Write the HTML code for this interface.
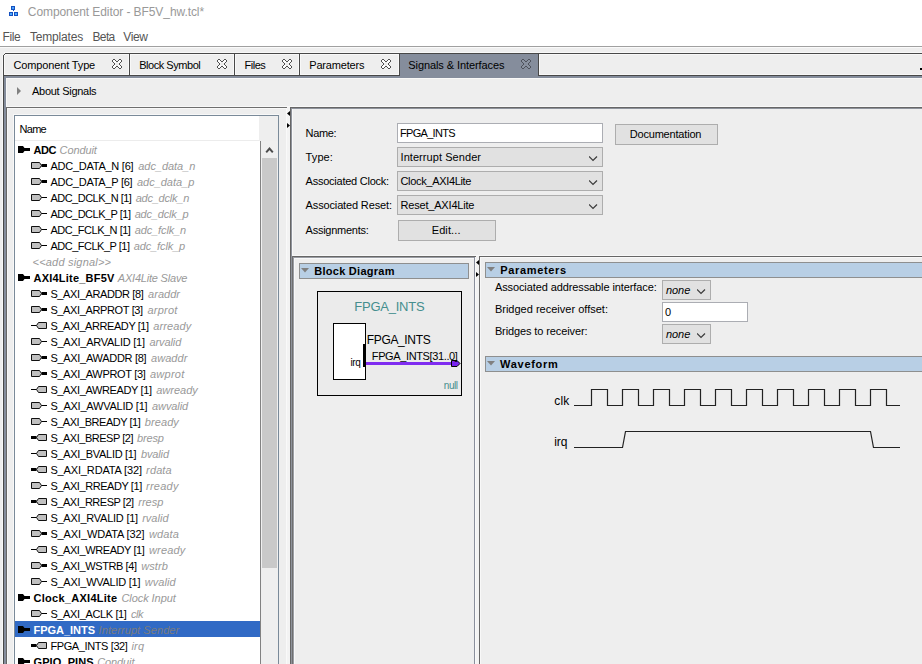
<!DOCTYPE html>
<html>
<head>
<meta charset="utf-8">
<title>Component Editor - BF5V_hw.tcl*</title>
<style>
html,body{margin:0;padding:0;}
body{width:922px;height:664px;overflow:hidden;position:relative;background:#eeeeee;font-family:"Liberation Sans",sans-serif;font-size:11px;color:#000;}
.abs{position:absolute;}
.t{position:absolute;white-space:pre;line-height:14px;height:14px;z-index:2;}
/* title + menu */
#titlebar{left:0;top:0;width:922px;height:46px;background:#fff;}
#title{left:28px;top:3px;font-size:12px;line-height:20px;height:20px;color:#999;}
.menu{font-size:12px;color:#555;top:30px;line-height:14px;}
#menuline{left:0;top:46px;width:922px;height:1px;background:#a0a0a0;}
/* tabs */
.tabt{top:58px;}
svg.xi{position:absolute;top:59px;}
/* tree */
.row{position:absolute;left:15px;width:245px;height:16px;}
.row.sel{background:#316ac5;}
.row .ico{position:absolute;top:4px;height:9px;width:14px;}
.row .ico svg{display:block;}
.row .tx{position:absolute;top:1px;line-height:14px;white-space:pre;font-size:11px;}
.row i{color:#999;}
.row.sel b{color:#fff;}
.row.sel i{color:#7f7f7f;}
/* form */
.combo{position:absolute;box-sizing:border-box;background:#e1e1e1;border:1px solid #adadad;}
.btn{position:absolute;box-sizing:border-box;background:#e1e1e1;border:1px solid #adadad;text-align:center;}
.inp{position:absolute;box-sizing:border-box;background:#fff;border:1px solid #abadb3;}
.hdr{position:absolute;box-sizing:border-box;background:#b8cfe5;border:1px solid #8e8f8f;height:16px;}
.hdr .t{font-weight:bold;top:0px;}
</style>
</head>
<body>
<!-- title bar + menu -->
<div id="titlebar" class="abs"></div>
<svg class="abs" style="left:9px;top:6px" width="9" height="10" viewBox="0 0 9 10">
  <rect x="2" y="0" width="4" height="4" fill="#1450c0"/><rect x="3" y="1" width="2" height="2" fill="#4aa0f8"/>
  <rect x="4" y="4" width="1" height="1" fill="#1450c0"/>
  <rect x="0" y="6" width="4" height="4" fill="#1450c0"/><rect x="1" y="7" width="2" height="2" fill="#4aa8ff"/>
  <rect x="5" y="6" width="4" height="4" fill="#1450c0"/><rect x="6" y="7" width="2" height="2" fill="#4aa8ff"/>
</svg>
<div class="t" style="left:27.8px;top:4.84px;font-size:12px;line-height:14px;height:14px;letter-spacing:-0.083px;color:#999;">Component Editor - BF5V_hw.tcl*</div>
<div class="t" style="left:2.6px;top:29.84px;font-size:12px;line-height:14px;height:14px;letter-spacing:-0.411px;color:#555;">File</div>
<div class="t" style="left:29.9px;top:29.84px;font-size:12px;line-height:14px;height:14px;letter-spacing:-0.178px;color:#555;">Templates</div>
<div class="t" style="left:92.5px;top:29.84px;font-size:12px;line-height:14px;height:14px;letter-spacing:-0.647px;color:#555;">Beta</div>
<div class="t" style="left:123.3px;top:29.84px;font-size:12px;line-height:14px;height:14px;letter-spacing:-0.374px;color:#555;">View</div>
<div id="menuline" class="abs"></div>
<div class="abs" style="left:0;top:47px;width:922px;height:1px;background:#fafafa;"></div>

<!-- tab strip -->
<div class="abs" style="left:4px;top:52px;width:918px;height:1px;background:#f8f8f8;"></div>
<div class="abs" style="left:5px;top:53px;width:917px;height:1px;background:#484848;"></div>
<div class="abs" style="left:5px;top:54px;width:917px;height:1px;background:#f8f8f8;"></div>
<div class="abs" style="left:4px;top:54px;width:1px;height:1px;background:#484848;"></div>
<div class="abs" style="left:2px;top:55px;width:1px;height:609px;background:#f8f8f8;"></div>
<div class="abs" style="left:4px;top:55px;width:1px;height:20px;background:#f8f8f8;"></div>
<div class="abs" style="left:4px;top:74px;width:918px;height:1px;background:#f8f8f8;"></div>
<div class="abs" style="left:128px;top:55px;width:1px;height:19px;background:#f8f8f8;"></div><div class="abs" style="left:129px;top:54px;width:1px;height:21px;background:#484848;"></div><div class="abs" style="left:130px;top:55px;width:1px;height:19px;background:#f8f8f8;"></div><div class="abs" style="left:233px;top:55px;width:1px;height:19px;background:#f8f8f8;"></div><div class="abs" style="left:234px;top:54px;width:1px;height:21px;background:#484848;"></div><div class="abs" style="left:235px;top:55px;width:1px;height:19px;background:#f8f8f8;"></div><div class="abs" style="left:298px;top:55px;width:1px;height:19px;background:#f8f8f8;"></div><div class="abs" style="left:299px;top:54px;width:1px;height:21px;background:#484848;"></div><div class="abs" style="left:300px;top:55px;width:1px;height:19px;background:#f8f8f8;"></div><div class="abs" style="left:398px;top:55px;width:1px;height:19px;background:#f8f8f8;"></div><div class="abs" style="left:399px;top:54px;width:1px;height:21px;background:#484848;"></div>
<div class="t" style="left:13.5px;top:58.19px;font-size:11px;line-height:14px;height:14px;letter-spacing:-0.141px;">Component Type</div><svg class="xi" style="left:112px" width="10" height="10" viewBox="0 0 10 10" shape-rendering="crispEdges"><path d="M1 1h1v1h-1zM2 1h1v1h-1zM7 1h1v1h-1zM8 1h1v1h-1zM1 2h1v1h-1zM2 2h1v1h-1zM3 2h1v1h-1zM6 2h1v1h-1zM7 2h1v1h-1zM8 2h1v1h-1zM2 3h1v1h-1zM3 3h1v1h-1zM6 3h1v1h-1zM7 3h1v1h-1zM2 6h1v1h-1zM3 6h1v1h-1zM6 6h1v1h-1zM7 6h1v1h-1zM1 7h1v1h-1zM2 7h1v1h-1zM3 7h1v1h-1zM6 7h1v1h-1zM7 7h1v1h-1zM8 7h1v1h-1zM1 8h1v1h-1zM2 8h1v1h-1zM7 8h1v1h-1zM8 8h1v1h-1z" fill="#ffffff"/><path d="M4 3h1v1h-1zM5 3h1v1h-1zM3 4h1v1h-1zM4 4h1v1h-1zM5 4h1v1h-1zM6 4h1v1h-1zM3 5h1v1h-1zM4 5h1v1h-1zM5 5h1v1h-1zM6 5h1v1h-1zM4 6h1v1h-1zM5 6h1v1h-1z" fill="#eeeeee"/><path d="M1 0h1v1h-1zM2 0h1v1h-1zM7 0h1v1h-1zM8 0h1v1h-1zM0 1h1v1h-1zM3 1h1v1h-1zM6 1h1v1h-1zM9 1h1v1h-1zM0 2h1v1h-1zM4 2h1v1h-1zM5 2h1v1h-1zM9 2h1v1h-1zM1 3h1v1h-1zM8 3h1v1h-1zM2 4h1v1h-1zM7 4h1v1h-1zM2 5h1v1h-1zM7 5h1v1h-1zM1 6h1v1h-1zM8 6h1v1h-1zM0 7h1v1h-1zM4 7h1v1h-1zM5 7h1v1h-1zM9 7h1v1h-1zM0 8h1v1h-1zM3 8h1v1h-1zM6 8h1v1h-1zM9 8h1v1h-1zM1 9h1v1h-1zM2 9h1v1h-1zM7 9h1v1h-1zM8 9h1v1h-1z" fill="#4f4f4f"/></svg>
<div class="t" style="left:139.2px;top:58.19px;font-size:11px;line-height:14px;height:14px;letter-spacing:-0.462px;">Block Symbol</div><svg class="xi" style="left:217px" width="10" height="10" viewBox="0 0 10 10" shape-rendering="crispEdges"><path d="M1 1h1v1h-1zM2 1h1v1h-1zM7 1h1v1h-1zM8 1h1v1h-1zM1 2h1v1h-1zM2 2h1v1h-1zM3 2h1v1h-1zM6 2h1v1h-1zM7 2h1v1h-1zM8 2h1v1h-1zM2 3h1v1h-1zM3 3h1v1h-1zM6 3h1v1h-1zM7 3h1v1h-1zM2 6h1v1h-1zM3 6h1v1h-1zM6 6h1v1h-1zM7 6h1v1h-1zM1 7h1v1h-1zM2 7h1v1h-1zM3 7h1v1h-1zM6 7h1v1h-1zM7 7h1v1h-1zM8 7h1v1h-1zM1 8h1v1h-1zM2 8h1v1h-1zM7 8h1v1h-1zM8 8h1v1h-1z" fill="#ffffff"/><path d="M4 3h1v1h-1zM5 3h1v1h-1zM3 4h1v1h-1zM4 4h1v1h-1zM5 4h1v1h-1zM6 4h1v1h-1zM3 5h1v1h-1zM4 5h1v1h-1zM5 5h1v1h-1zM6 5h1v1h-1zM4 6h1v1h-1zM5 6h1v1h-1z" fill="#eeeeee"/><path d="M1 0h1v1h-1zM2 0h1v1h-1zM7 0h1v1h-1zM8 0h1v1h-1zM0 1h1v1h-1zM3 1h1v1h-1zM6 1h1v1h-1zM9 1h1v1h-1zM0 2h1v1h-1zM4 2h1v1h-1zM5 2h1v1h-1zM9 2h1v1h-1zM1 3h1v1h-1zM8 3h1v1h-1zM2 4h1v1h-1zM7 4h1v1h-1zM2 5h1v1h-1zM7 5h1v1h-1zM1 6h1v1h-1zM8 6h1v1h-1zM0 7h1v1h-1zM4 7h1v1h-1zM5 7h1v1h-1zM9 7h1v1h-1zM0 8h1v1h-1zM3 8h1v1h-1zM6 8h1v1h-1zM9 8h1v1h-1zM1 9h1v1h-1zM2 9h1v1h-1zM7 9h1v1h-1zM8 9h1v1h-1z" fill="#4f4f4f"/></svg>
<div class="t" style="left:244.5px;top:58.19px;font-size:11px;line-height:14px;height:14px;letter-spacing:-0.467px;">Files</div><svg class="xi" style="left:282px" width="10" height="10" viewBox="0 0 10 10" shape-rendering="crispEdges"><path d="M1 1h1v1h-1zM2 1h1v1h-1zM7 1h1v1h-1zM8 1h1v1h-1zM1 2h1v1h-1zM2 2h1v1h-1zM3 2h1v1h-1zM6 2h1v1h-1zM7 2h1v1h-1zM8 2h1v1h-1zM2 3h1v1h-1zM3 3h1v1h-1zM6 3h1v1h-1zM7 3h1v1h-1zM2 6h1v1h-1zM3 6h1v1h-1zM6 6h1v1h-1zM7 6h1v1h-1zM1 7h1v1h-1zM2 7h1v1h-1zM3 7h1v1h-1zM6 7h1v1h-1zM7 7h1v1h-1zM8 7h1v1h-1zM1 8h1v1h-1zM2 8h1v1h-1zM7 8h1v1h-1zM8 8h1v1h-1z" fill="#ffffff"/><path d="M4 3h1v1h-1zM5 3h1v1h-1zM3 4h1v1h-1zM4 4h1v1h-1zM5 4h1v1h-1zM6 4h1v1h-1zM3 5h1v1h-1zM4 5h1v1h-1zM5 5h1v1h-1zM6 5h1v1h-1zM4 6h1v1h-1zM5 6h1v1h-1z" fill="#eeeeee"/><path d="M1 0h1v1h-1zM2 0h1v1h-1zM7 0h1v1h-1zM8 0h1v1h-1zM0 1h1v1h-1zM3 1h1v1h-1zM6 1h1v1h-1zM9 1h1v1h-1zM0 2h1v1h-1zM4 2h1v1h-1zM5 2h1v1h-1zM9 2h1v1h-1zM1 3h1v1h-1zM8 3h1v1h-1zM2 4h1v1h-1zM7 4h1v1h-1zM2 5h1v1h-1zM7 5h1v1h-1zM1 6h1v1h-1zM8 6h1v1h-1zM0 7h1v1h-1zM4 7h1v1h-1zM5 7h1v1h-1zM9 7h1v1h-1zM0 8h1v1h-1zM3 8h1v1h-1zM6 8h1v1h-1zM9 8h1v1h-1zM1 9h1v1h-1zM2 9h1v1h-1zM7 9h1v1h-1zM8 9h1v1h-1z" fill="#4f4f4f"/></svg>
<div class="t" style="left:309.3px;top:58.19px;font-size:11px;line-height:14px;height:14px;letter-spacing:-0.196px;">Parameters</div><svg class="xi" style="left:381px" width="10" height="10" viewBox="0 0 10 10" shape-rendering="crispEdges"><path d="M1 1h1v1h-1zM2 1h1v1h-1zM7 1h1v1h-1zM8 1h1v1h-1zM1 2h1v1h-1zM2 2h1v1h-1zM3 2h1v1h-1zM6 2h1v1h-1zM7 2h1v1h-1zM8 2h1v1h-1zM2 3h1v1h-1zM3 3h1v1h-1zM6 3h1v1h-1zM7 3h1v1h-1zM2 6h1v1h-1zM3 6h1v1h-1zM6 6h1v1h-1zM7 6h1v1h-1zM1 7h1v1h-1zM2 7h1v1h-1zM3 7h1v1h-1zM6 7h1v1h-1zM7 7h1v1h-1zM8 7h1v1h-1zM1 8h1v1h-1zM2 8h1v1h-1zM7 8h1v1h-1zM8 8h1v1h-1z" fill="#ffffff"/><path d="M4 3h1v1h-1zM5 3h1v1h-1zM3 4h1v1h-1zM4 4h1v1h-1zM5 4h1v1h-1zM6 4h1v1h-1zM3 5h1v1h-1zM4 5h1v1h-1zM5 5h1v1h-1zM6 5h1v1h-1zM4 6h1v1h-1zM5 6h1v1h-1z" fill="#eeeeee"/><path d="M1 0h1v1h-1zM2 0h1v1h-1zM7 0h1v1h-1zM8 0h1v1h-1zM0 1h1v1h-1zM3 1h1v1h-1zM6 1h1v1h-1zM9 1h1v1h-1zM0 2h1v1h-1zM4 2h1v1h-1zM5 2h1v1h-1zM9 2h1v1h-1zM1 3h1v1h-1zM8 3h1v1h-1zM2 4h1v1h-1zM7 4h1v1h-1zM2 5h1v1h-1zM7 5h1v1h-1zM1 6h1v1h-1zM8 6h1v1h-1zM0 7h1v1h-1zM4 7h1v1h-1zM5 7h1v1h-1zM9 7h1v1h-1zM0 8h1v1h-1zM3 8h1v1h-1zM6 8h1v1h-1zM9 8h1v1h-1zM1 9h1v1h-1zM2 9h1v1h-1zM7 9h1v1h-1zM8 9h1v1h-1z" fill="#4f4f4f"/></svg>
<div class="abs" style="left:920px;top:68px;width:2px;height:2px;background:#000;"></div>

<!-- content frame -->
<div class="abs" style="left:3px;top:75px;width:919px;height:1px;background:#484848;"></div>
<div class="abs" style="left:4px;top:76px;width:918px;height:2px;background:#858d9c;"></div>
<div class="abs" style="left:3px;top:55px;width:1px;height:609px;background:#484848;"></div>
<div class="abs" style="left:4px;top:76px;width:2px;height:588px;background:#858d9c;"></div>
<div class="abs" style="left:6px;top:78px;width:916px;height:1px;background:#f8f8f8;"></div>
<div class="abs" style="left:6px;top:78px;width:1px;height:29px;background:#f8f8f8;"></div>
<div class="abs" style="left:6px;top:106px;width:916px;height:1px;background:#f8f8f8;"></div>
<div class="abs" style="left:6px;top:107px;width:1px;height:557px;background:#666;"></div>
<div class="abs" style="left:7px;top:108px;width:1px;height:556px;background:#f8f8f8;"></div>
<div class="abs" style="left:13px;top:114px;width:266px;height:1px;background:#f8f8f8;"></div>
<div class="abs" style="left:13px;top:114px;width:1px;height:550px;background:#f8f8f8;"></div>
<!-- selected tab -->
<div class="abs" style="left:400px;top:54px;width:138px;height:24px;background:#858d9c;"></div>
<div class="abs" style="left:538px;top:54px;width:1px;height:22px;background:#484848;"></div>
<div class="abs" style="left:539px;top:55px;width:1px;height:20px;background:#f8f8f8;"></div>
<div class="t" style="left:408.3px;top:58.19px;font-size:11px;line-height:14px;height:14px;letter-spacing:-0.087px;">Signals &amp; Interfaces</div><svg class="xi" style="left:521px" width="10" height="10" viewBox="0 0 10 10" shape-rendering="crispEdges"><path d="M1 1h1v1h-1zM2 1h1v1h-1zM7 1h1v1h-1zM8 1h1v1h-1zM1 2h1v1h-1zM2 2h1v1h-1zM3 2h1v1h-1zM6 2h1v1h-1zM7 2h1v1h-1zM8 2h1v1h-1zM2 3h1v1h-1zM3 3h1v1h-1zM6 3h1v1h-1zM7 3h1v1h-1zM2 6h1v1h-1zM3 6h1v1h-1zM6 6h1v1h-1zM7 6h1v1h-1zM1 7h1v1h-1zM2 7h1v1h-1zM3 7h1v1h-1zM6 7h1v1h-1zM7 7h1v1h-1zM8 7h1v1h-1zM1 8h1v1h-1zM2 8h1v1h-1zM7 8h1v1h-1zM8 8h1v1h-1z" fill="#8b93a1"/><path d="M4 3h1v1h-1zM5 3h1v1h-1zM3 4h1v1h-1zM4 4h1v1h-1zM5 4h1v1h-1zM6 4h1v1h-1zM3 5h1v1h-1zM4 5h1v1h-1zM5 5h1v1h-1zM6 5h1v1h-1zM4 6h1v1h-1zM5 6h1v1h-1z" fill="#878f9e"/><path d="M1 0h1v1h-1zM2 0h1v1h-1zM7 0h1v1h-1zM8 0h1v1h-1zM0 1h1v1h-1zM3 1h1v1h-1zM6 1h1v1h-1zM9 1h1v1h-1zM0 2h1v1h-1zM4 2h1v1h-1zM5 2h1v1h-1zM9 2h1v1h-1zM1 3h1v1h-1zM8 3h1v1h-1zM2 4h1v1h-1zM7 4h1v1h-1zM2 5h1v1h-1zM7 5h1v1h-1zM1 6h1v1h-1zM8 6h1v1h-1zM0 7h1v1h-1zM4 7h1v1h-1zM5 7h1v1h-1zM9 7h1v1h-1zM0 8h1v1h-1zM3 8h1v1h-1zM6 8h1v1h-1zM9 8h1v1h-1zM1 9h1v1h-1zM2 9h1v1h-1zM7 9h1v1h-1zM8 9h1v1h-1z" fill="#4e525c"/></svg>

<!-- About Signals -->
<svg class="abs" style="left:17px;top:87px" width="4" height="8" viewBox="0 0 4 8"><path d="M0 0L4 4L0 8z" fill="#808080"/></svg>
<div class="t" style="left:32.0px;top:84.19px;font-size:11px;line-height:14px;height:14px;letter-spacing:-0.276px;">About Signals</div>
<div class="abs" style="left:6px;top:107px;width:281px;height:1px;background:#6e6e6e;"></div>
<div class="abs" style="left:7px;top:108px;width:279px;height:1px;background:#f8f8f8;"></div>

<!-- tree table -->
<div class="abs" style="left:14px;top:115px;width:265px;height:560px;border:1px solid #7a8a99;box-sizing:border-box;background:#fff;"></div>
<div class="abs" style="left:15px;top:140px;width:263px;height:1px;background:#ececec;"></div>
<div class="abs" style="left:259px;top:116px;width:19px;height:25px;background:#eeeeee;"></div>
<div class="t" style="left:19.5px;top:122.19px;font-size:11px;line-height:14px;height:14px;letter-spacing:-0.700px;">Name</div>
<!-- scrollbar -->
<div class="abs" style="left:260px;top:141px;width:1px;height:523px;background:#828282;"></div>
<div class="abs" style="left:261px;top:141px;width:17px;height:523px;background:#efefef;"></div>
<svg class="abs" style="left:265px;top:146px" width="9" height="8" viewBox="0 0 9 8"><path d="M1.2 6.3L4.5 2.6L7.8 6.3" stroke="#4c4c4c" stroke-width="2" fill="none"/></svg>
<div class="abs" style="left:262px;top:158px;width:15px;height:410px;background:#c9c9c9;"></div>
<svg class="abs" style="left:18px;top:146px" width="12" height="7" viewBox="0 0 12 7"><path d="M0 0H5L6.5 2H12V5H6.5L5 7H0Z" fill="#000"/></svg>
<div class="t" style="left:33.5px;top:143.19px;font-size:11px;line-height:14px;height:14px;letter-spacing:-0.463px;font-weight:bold;color:#000;">ADC</div>
<div class="t" style="left:59.6px;top:143.19px;font-size:11px;line-height:14px;height:14px;letter-spacing:-0.118px;font-style:italic;color:#999;">Conduit</div>
<svg class="abs" style="left:31px;top:161px" width="16" height="9" viewBox="0 0 16 9"><path d="M0.5 1.5h8l2 3l-2 3h-8z" fill="#c0c0c0" stroke="#111" stroke-width="1"/><rect x="10.5" y="3" width="5.5" height="3" fill="#000"/></svg>
<div class="t" style="left:50.4px;top:159.19px;font-size:11px;line-height:14px;height:14px;letter-spacing:-0.245px;color:#000;">ADC_DATA_N [6]</div>
<div class="t" style="left:138.3px;top:159.19px;font-size:11px;line-height:14px;height:14px;letter-spacing:-0.055px;font-style:italic;color:#999;">adc_data_n</div>
<svg class="abs" style="left:31px;top:177px" width="16" height="9" viewBox="0 0 16 9"><path d="M0.5 1.5h8l2 3l-2 3h-8z" fill="#c0c0c0" stroke="#111" stroke-width="1"/><rect x="10.5" y="3" width="5.5" height="3" fill="#000"/></svg>
<div class="t" style="left:50.4px;top:175.19px;font-size:11px;line-height:14px;height:14px;letter-spacing:-0.256px;color:#000;">ADC_DATA_P [6]</div>
<div class="t" style="left:137.0px;top:175.19px;font-size:11px;line-height:14px;height:14px;letter-spacing:-0.023px;font-style:italic;color:#999;">adc_data_p</div>
<svg class="abs" style="left:31px;top:193px" width="16" height="9" viewBox="0 0 16 9"><path d="M0.5 1.5h8l2 3l-2 3h-8z" fill="#c0c0c0" stroke="#111" stroke-width="1"/><rect x="10.5" y="4" width="5.5" height="1" fill="#000"/></svg>
<div class="t" style="left:50.4px;top:191.19px;font-size:11px;line-height:14px;height:14px;letter-spacing:-0.501px;color:#000;">ADC_DCLK_N [1]</div>
<div class="t" style="left:135.7px;top:191.19px;font-size:11px;line-height:14px;height:14px;letter-spacing:-0.229px;font-style:italic;color:#999;">adc_dclk_n</div>
<svg class="abs" style="left:31px;top:209px" width="16" height="9" viewBox="0 0 16 9"><path d="M0.5 1.5h8l2 3l-2 3h-8z" fill="#c0c0c0" stroke="#111" stroke-width="1"/><rect x="10.5" y="4" width="5.5" height="1" fill="#000"/></svg>
<div class="t" style="left:50.4px;top:207.19px;font-size:11px;line-height:14px;height:14px;letter-spacing:-0.513px;color:#000;">ADC_DCLK_P [1]</div>
<div class="t" style="left:134.7px;top:207.19px;font-size:11px;line-height:14px;height:14px;letter-spacing:-0.196px;font-style:italic;color:#999;">adc_dclk_p</div>
<svg class="abs" style="left:31px;top:225px" width="16" height="9" viewBox="0 0 16 9"><path d="M0.5 1.5h8l2 3l-2 3h-8z" fill="#c0c0c0" stroke="#111" stroke-width="1"/><rect x="10.5" y="4" width="5.5" height="1" fill="#000"/></svg>
<div class="t" style="left:50.4px;top:223.19px;font-size:11px;line-height:14px;height:14px;letter-spacing:-0.483px;color:#000;">ADC_FCLK_N [1]</div>
<div class="t" style="left:134.7px;top:223.19px;font-size:11px;line-height:14px;height:14px;letter-spacing:-0.118px;font-style:italic;color:#999;">adc_fclk_n</div>
<svg class="abs" style="left:31px;top:241px" width="16" height="9" viewBox="0 0 16 9"><path d="M0.5 1.5h8l2 3l-2 3h-8z" fill="#c0c0c0" stroke="#111" stroke-width="1"/><rect x="10.5" y="4" width="5.5" height="1" fill="#000"/></svg>
<div class="t" style="left:50.4px;top:239.19px;font-size:11px;line-height:14px;height:14px;letter-spacing:-0.496px;color:#000;">ADC_FCLK_P [1]</div>
<div class="t" style="left:133.7px;top:239.19px;font-size:11px;line-height:14px;height:14px;letter-spacing:-0.118px;font-style:italic;color:#999;">adc_fclk_p</div>
<div class="t" style="left:32.5px;top:255.19px;font-size:11px;line-height:14px;height:14px;letter-spacing:0.207px;font-style:italic;color:#999;">&lt;&lt;add signal&gt;&gt;</div>
<svg class="abs" style="left:18px;top:274px" width="12" height="7" viewBox="0 0 12 7"><path d="M0 0H5L6.5 2H12V5H6.5L5 7H0Z" fill="#000"/></svg>
<div class="t" style="left:33.5px;top:271.19px;font-size:11px;line-height:14px;height:14px;letter-spacing:0.214px;font-weight:bold;color:#000;">AXI4Lite_BF5V</div>
<div class="t" style="left:117.8px;top:271.19px;font-size:11px;line-height:14px;height:14px;letter-spacing:-0.203px;font-style:italic;color:#999;">AXI4Lite Slave</div>
<svg class="abs" style="left:31px;top:289px" width="16" height="9" viewBox="0 0 16 9"><path d="M0.5 1.5h8l2 3l-2 3h-8z" fill="#c0c0c0" stroke="#111" stroke-width="1"/><rect x="10.5" y="3" width="5.5" height="3" fill="#000"/></svg>
<div class="t" style="left:50.4px;top:287.19px;font-size:11px;line-height:14px;height:14px;letter-spacing:-0.374px;color:#000;">S_AXI_ARADDR [8]</div>
<div class="t" style="left:148.1px;top:287.19px;font-size:11px;line-height:14px;height:14px;letter-spacing:0.016px;font-style:italic;color:#999;">araddr</div>
<svg class="abs" style="left:31px;top:305px" width="16" height="9" viewBox="0 0 16 9"><path d="M0.5 1.5h8l2 3l-2 3h-8z" fill="#c0c0c0" stroke="#111" stroke-width="1"/><rect x="10.5" y="3" width="5.5" height="3" fill="#000"/></svg>
<div class="t" style="left:50.4px;top:303.19px;font-size:11px;line-height:14px;height:14px;letter-spacing:-0.364px;color:#000;">S_AXI_ARPROT [3]</div>
<div class="t" style="left:147.4px;top:303.19px;font-size:11px;line-height:14px;height:14px;letter-spacing:0.252px;font-style:italic;color:#999;">arprot</div>
<svg class="abs" style="left:31px;top:321px" width="16" height="9" viewBox="0 0 16 9"><path d="M15.5 1.5h-8l-2 3l2 3h8z" fill="#c0c0c0" stroke="#111" stroke-width="1"/><rect x="0" y="4" width="5.5" height="1" fill="#000"/></svg>
<div class="t" style="left:50.4px;top:319.19px;font-size:11px;line-height:14px;height:14px;letter-spacing:-0.430px;color:#000;">S_AXI_ARREADY [1]</div>
<div class="t" style="left:153.3px;top:319.19px;font-size:11px;line-height:14px;height:14px;letter-spacing:0.111px;font-style:italic;color:#999;">arready</div>
<svg class="abs" style="left:31px;top:337px" width="16" height="9" viewBox="0 0 16 9"><path d="M0.5 1.5h8l2 3l-2 3h-8z" fill="#c0c0c0" stroke="#111" stroke-width="1"/><rect x="10.5" y="4" width="5.5" height="1" fill="#000"/></svg>
<div class="t" style="left:50.4px;top:335.19px;font-size:11px;line-height:14px;height:14px;letter-spacing:-0.252px;color:#000;">S_AXI_ARVALID [1]</div>
<div class="t" style="left:149.4px;top:335.19px;font-size:11px;line-height:14px;height:14px;letter-spacing:-0.074px;font-style:italic;color:#999;">arvalid</div>
<svg class="abs" style="left:31px;top:353px" width="16" height="9" viewBox="0 0 16 9"><path d="M0.5 1.5h8l2 3l-2 3h-8z" fill="#c0c0c0" stroke="#111" stroke-width="1"/><rect x="10.5" y="3" width="5.5" height="3" fill="#000"/></svg>
<div class="t" style="left:50.4px;top:351.19px;font-size:11px;line-height:14px;height:14px;letter-spacing:-0.292px;color:#000;">S_AXI_AWADDR [8]</div>
<div class="t" style="left:151.0px;top:351.19px;font-size:11px;line-height:14px;height:14px;letter-spacing:0.061px;font-style:italic;color:#999;">awaddr</div>
<svg class="abs" style="left:31px;top:369px" width="16" height="9" viewBox="0 0 16 9"><path d="M0.5 1.5h8l2 3l-2 3h-8z" fill="#c0c0c0" stroke="#111" stroke-width="1"/><rect x="10.5" y="3" width="5.5" height="3" fill="#000"/></svg>
<div class="t" style="left:50.4px;top:367.19px;font-size:11px;line-height:14px;height:14px;letter-spacing:-0.328px;color:#000;">S_AXI_AWPROT [3]</div>
<div class="t" style="left:150.0px;top:367.19px;font-size:11px;line-height:14px;height:14px;letter-spacing:0.244px;font-style:italic;color:#999;">awprot</div>
<svg class="abs" style="left:31px;top:385px" width="16" height="9" viewBox="0 0 16 9"><path d="M15.5 1.5h-8l-2 3l2 3h8z" fill="#c0c0c0" stroke="#111" stroke-width="1"/><rect x="0" y="4" width="5.5" height="1" fill="#000"/></svg>
<div class="t" style="left:50.4px;top:383.19px;font-size:11px;line-height:14px;height:14px;letter-spacing:-0.377px;color:#000;">S_AXI_AWREADY [1]</div>
<div class="t" style="left:156.2px;top:383.19px;font-size:11px;line-height:14px;height:14px;letter-spacing:0.011px;font-style:italic;color:#999;">awready</div>
<svg class="abs" style="left:31px;top:401px" width="16" height="9" viewBox="0 0 16 9"><path d="M0.5 1.5h8l2 3l-2 3h-8z" fill="#c0c0c0" stroke="#111" stroke-width="1"/><rect x="10.5" y="4" width="5.5" height="1" fill="#000"/></svg>
<div class="t" style="left:50.4px;top:399.19px;font-size:11px;line-height:14px;height:14px;letter-spacing:-0.229px;color:#000;">S_AXI_AWVALID [1]</div>
<div class="t" style="left:152.0px;top:399.19px;font-size:11px;line-height:14px;height:14px;letter-spacing:-0.081px;font-style:italic;color:#999;">awvalid</div>
<svg class="abs" style="left:31px;top:417px" width="16" height="9" viewBox="0 0 16 9"><path d="M0.5 1.5h8l2 3l-2 3h-8z" fill="#c0c0c0" stroke="#111" stroke-width="1"/><rect x="10.5" y="4" width="5.5" height="1" fill="#000"/></svg>
<div class="t" style="left:50.4px;top:415.19px;font-size:11px;line-height:14px;height:14px;letter-spacing:-0.488px;color:#000;">S_AXI_BREADY [1]</div>
<div class="t" style="left:144.8px;top:415.19px;font-size:11px;line-height:14px;height:14px;letter-spacing:0.088px;font-style:italic;color:#999;">bready</div>
<svg class="abs" style="left:31px;top:433px" width="16" height="9" viewBox="0 0 16 9"><path d="M15.5 1.5h-8l-2 3l2 3h8z" fill="#c0c0c0" stroke="#111" stroke-width="1"/><rect x="0" y="3" width="5.5" height="3" fill="#000"/></svg>
<div class="t" style="left:50.4px;top:431.19px;font-size:11px;line-height:14px;height:14px;letter-spacing:-0.469px;color:#000;">S_AXI_BRESP [2]</div>
<div class="t" style="left:137.0px;top:431.19px;font-size:11px;line-height:14px;height:14px;letter-spacing:-0.169px;font-style:italic;color:#999;">bresp</div>
<svg class="abs" style="left:31px;top:449px" width="16" height="9" viewBox="0 0 16 9"><path d="M15.5 1.5h-8l-2 3l2 3h8z" fill="#c0c0c0" stroke="#111" stroke-width="1"/><rect x="0" y="4" width="5.5" height="1" fill="#000"/></svg>
<div class="t" style="left:50.4px;top:447.19px;font-size:11px;line-height:14px;height:14px;letter-spacing:-0.312px;color:#000;">S_AXI_BVALID [1]</div>
<div class="t" style="left:140.9px;top:447.19px;font-size:11px;line-height:14px;height:14px;letter-spacing:-0.127px;font-style:italic;color:#999;">bvalid</div>
<svg class="abs" style="left:31px;top:465px" width="16" height="9" viewBox="0 0 16 9"><path d="M15.5 1.5h-8l-2 3l2 3h8z" fill="#c0c0c0" stroke="#111" stroke-width="1"/><rect x="0" y="3" width="5.5" height="3" fill="#000"/></svg>
<div class="t" style="left:50.4px;top:463.19px;font-size:11px;line-height:14px;height:14px;letter-spacing:-0.144px;color:#000;">S_AXI_RDATA [32]</div>
<div class="t" style="left:146.1px;top:463.19px;font-size:11px;line-height:14px;height:14px;letter-spacing:0.126px;font-style:italic;color:#999;">rdata</div>
<svg class="abs" style="left:31px;top:481px" width="16" height="9" viewBox="0 0 16 9"><path d="M0.5 1.5h8l2 3l-2 3h-8z" fill="#c0c0c0" stroke="#111" stroke-width="1"/><rect x="10.5" y="4" width="5.5" height="1" fill="#000"/></svg>
<div class="t" style="left:50.4px;top:479.19px;font-size:11px;line-height:14px;height:14px;letter-spacing:-0.425px;color:#000;">S_AXI_RREADY [1]</div>
<div class="t" style="left:146.1px;top:479.19px;font-size:11px;line-height:14px;height:14px;letter-spacing:0.226px;font-style:italic;color:#999;">rready</div>
<svg class="abs" style="left:31px;top:497px" width="16" height="9" viewBox="0 0 16 9"><path d="M15.5 1.5h-8l-2 3l2 3h8z" fill="#c0c0c0" stroke="#111" stroke-width="1"/><rect x="0" y="3" width="5.5" height="3" fill="#000"/></svg>
<div class="t" style="left:50.4px;top:495.19px;font-size:11px;line-height:14px;height:14px;letter-spacing:-0.466px;color:#000;">S_AXI_RRESP [2]</div>
<div class="t" style="left:138.3px;top:495.19px;font-size:11px;line-height:14px;height:14px;letter-spacing:-0.001px;font-style:italic;color:#999;">rresp</div>
<svg class="abs" style="left:31px;top:513px" width="16" height="9" viewBox="0 0 16 9"><path d="M15.5 1.5h-8l-2 3l2 3h8z" fill="#c0c0c0" stroke="#111" stroke-width="1"/><rect x="0" y="4" width="5.5" height="1" fill="#000"/></svg>
<div class="t" style="left:50.4px;top:511.19px;font-size:11px;line-height:14px;height:14px;letter-spacing:-0.236px;color:#000;">S_AXI_RVALID [1]</div>
<div class="t" style="left:142.2px;top:511.19px;font-size:11px;line-height:14px;height:14px;letter-spacing:0.010px;font-style:italic;color:#999;">rvalid</div>
<svg class="abs" style="left:31px;top:529px" width="16" height="9" viewBox="0 0 16 9"><path d="M0.5 1.5h8l2 3l-2 3h-8z" fill="#c0c0c0" stroke="#111" stroke-width="1"/><rect x="10.5" y="3" width="5.5" height="3" fill="#000"/></svg>
<div class="t" style="left:50.4px;top:527.19px;font-size:11px;line-height:14px;height:14px;letter-spacing:-0.134px;color:#000;">S_AXI_WDATA [32]</div>
<div class="t" style="left:149.0px;top:527.19px;font-size:11px;line-height:14px;height:14px;letter-spacing:0.116px;font-style:italic;color:#999;">wdata</div>
<svg class="abs" style="left:31px;top:545px" width="16" height="9" viewBox="0 0 16 9"><path d="M15.5 1.5h-8l-2 3l2 3h8z" fill="#c0c0c0" stroke="#111" stroke-width="1"/><rect x="0" y="4" width="5.5" height="1" fill="#000"/></svg>
<div class="t" style="left:50.4px;top:543.19px;font-size:11px;line-height:14px;height:14px;letter-spacing:-0.414px;color:#000;">S_AXI_WREADY [1]</div>
<div class="t" style="left:149.0px;top:543.19px;font-size:11px;line-height:14px;height:14px;letter-spacing:0.163px;font-style:italic;color:#999;">wready</div>
<svg class="abs" style="left:31px;top:561px" width="16" height="9" viewBox="0 0 16 9"><path d="M0.5 1.5h8l2 3l-2 3h-8z" fill="#c0c0c0" stroke="#111" stroke-width="1"/><rect x="10.5" y="3" width="5.5" height="3" fill="#000"/></svg>
<div class="t" style="left:50.4px;top:559.19px;font-size:11px;line-height:14px;height:14px;letter-spacing:-0.405px;color:#000;">S_AXI_WSTRB [4]</div>
<div class="t" style="left:141.2px;top:559.19px;font-size:11px;line-height:14px;height:14px;letter-spacing:0.081px;font-style:italic;color:#999;">wstrb</div>
<svg class="abs" style="left:31px;top:577px" width="16" height="9" viewBox="0 0 16 9"><path d="M0.5 1.5h8l2 3l-2 3h-8z" fill="#c0c0c0" stroke="#111" stroke-width="1"/><rect x="10.5" y="4" width="5.5" height="1" fill="#000"/></svg>
<div class="t" style="left:50.4px;top:575.19px;font-size:11px;line-height:14px;height:14px;letter-spacing:-0.259px;color:#000;">S_AXI_WVALID [1]</div>
<div class="t" style="left:144.8px;top:575.19px;font-size:11px;line-height:14px;height:14px;letter-spacing:0.056px;font-style:italic;color:#999;">wvalid</div>
<svg class="abs" style="left:18px;top:594px" width="12" height="7" viewBox="0 0 12 7"><path d="M0 0H5L6.5 2H12V5H6.5L5 7H0Z" fill="#000"/></svg>
<div class="t" style="left:33.5px;top:591.19px;font-size:11px;line-height:14px;height:14px;letter-spacing:0.276px;font-weight:bold;color:#000;">Clock_AXI4Lite</div>
<div class="t" style="left:121.4px;top:591.19px;font-size:11px;line-height:14px;height:14px;letter-spacing:-0.062px;font-style:italic;color:#999;">Clock Input</div>
<svg class="abs" style="left:31px;top:609px" width="16" height="9" viewBox="0 0 16 9"><path d="M0.5 1.5h8l2 3l-2 3h-8z" fill="#c0c0c0" stroke="#111" stroke-width="1"/><rect x="10.5" y="4" width="5.5" height="1" fill="#000"/></svg>
<div class="t" style="left:50.4px;top:607.19px;font-size:11px;line-height:14px;height:14px;letter-spacing:-0.370px;color:#000;">S_AXI_ACLK [1]</div>
<div class="t" style="left:131.1px;top:607.19px;font-size:11px;line-height:14px;height:14px;letter-spacing:-0.471px;font-style:italic;color:#999;">clk</div>
<div class="abs" style="left:15px;top:621px;width:245px;height:16px;background:#316ac5;"></div>
<svg class="abs" style="left:18px;top:626px" width="12" height="7" viewBox="0 0 12 7"><path d="M0 0H5L6.5 2H12V5H6.5L5 7H0Z" fill="#000"/></svg>
<div class="t" style="left:33.5px;top:623.19px;font-size:11px;line-height:14px;height:14px;letter-spacing:-0.026px;font-weight:bold;color:#fff;">FPGA_INTS</div>
<div class="t" style="left:98.6px;top:623.19px;font-size:11px;line-height:14px;height:14px;letter-spacing:0.075px;font-style:italic;color:#7c7c7c;">Interrupt Sender</div>
<svg class="abs" style="left:31px;top:641px" width="16" height="9" viewBox="0 0 16 9"><path d="M15.5 1.5h-8l-2 3l2 3h8z" fill="#c0c0c0" stroke="#111" stroke-width="1"/><rect x="0" y="3" width="5.5" height="3" fill="#000"/></svg>
<div class="t" style="left:50.4px;top:639.19px;font-size:11px;line-height:14px;height:14px;letter-spacing:-0.386px;color:#000;">FPGA_INTS [32]</div>
<div class="t" style="left:131.5px;top:639.19px;font-size:11px;line-height:14px;height:14px;letter-spacing:0.152px;font-style:italic;color:#999;">irq</div>
<svg class="abs" style="left:18px;top:658px" width="12" height="7" viewBox="0 0 12 7"><path d="M0 0H5L6.5 2H12V5H6.5L5 7H0Z" fill="#000"/></svg>
<div class="t" style="left:33.5px;top:655.19px;font-size:11px;line-height:14px;height:14px;letter-spacing:0.101px;font-weight:bold;color:#000;">GPIO_PINS</div>
<div class="t" style="left:97.3px;top:655.19px;font-size:11px;line-height:14px;height:14px;letter-spacing:-0.118px;font-style:italic;color:#999;">Conduit</div>

<!-- splitter arrows -->
<div class="abs" style="left:286px;top:108px;width:1px;height:556px;background:#f9f9f9;"></div>
<div class="abs" style="left:287px;top:107px;width:3px;height:557px;background:#f3f3f3;"></div>
<svg class="abs" style="left:287px;top:111px" width="3" height="5" viewBox="0 0 3 5"><path d="M3 0L0 2.5L3 5z" fill="#000"/></svg>
<svg class="abs" style="left:287px;top:123px" width="3" height="5" viewBox="0 0 3 5"><path d="M0 0L3 2.5L0 5z" fill="#000"/></svg>

<!-- right panel frame -->
<div class="abs" style="left:290px;top:107px;width:632px;height:1px;background:#666;"></div>
<div class="abs" style="left:291px;top:108px;width:631px;height:1px;background:#8e929b;"></div>
<div class="abs" style="left:290px;top:107px;width:1px;height:557px;background:#666;"></div>
<div class="abs" style="left:291px;top:108px;width:1px;height:556px;background:#8e929b;"></div>
<div class="abs" style="left:292px;top:109px;width:1px;height:147px;background:#f8f8f8;"></div>
<div class="abs" style="left:292px;top:255px;width:630px;height:1px;background:#f8f8f8;"></div>

<!-- form -->
<div class="t" style="left:305.6px;top:126.19px;font-size:11px;line-height:14px;height:14px;letter-spacing:-0.381px;">Name:</div>
<div class="t" style="left:305.6px;top:150.19px;font-size:11px;line-height:14px;height:14px;letter-spacing:0.099px;">Type:</div>
<div class="t" style="left:305.6px;top:174.19px;font-size:11px;line-height:14px;height:14px;letter-spacing:-0.243px;">Associated Clock:</div>
<div class="t" style="left:305.6px;top:198.19px;font-size:11px;line-height:14px;height:14px;letter-spacing:-0.144px;">Associated Reset:</div>
<div class="t" style="left:305.6px;top:223.19px;font-size:11px;line-height:14px;height:14px;letter-spacing:-0.253px;">Assignments:</div>
<div class="inp" style="left:397px;top:123px;width:206px;height:20px;"></div>
<div class="t" style="left:400.0px;top:126.19px;font-size:11px;line-height:14px;height:14px;letter-spacing:-0.700px;">FPGA_INTS</div>
<div class="btn" style="left:615px;top:124px;width:103px;height:21px;"></div>
<div class="t" style="left:629.7px;top:127.19px;font-size:11px;line-height:14px;height:14px;letter-spacing:-0.185px;">Documentation</div>
<div class="combo" style="left:397px;top:147px;width:206px;height:20px;"></div>
<div class="t" style="left:400.5px;top:150.19px;font-size:11px;line-height:14px;height:14px;letter-spacing:0.069px;">Interrupt Sender</div>
<svg class="abs" style="left:589px;top:156px" width="9" height="6" viewBox="0 0 9 6"><path d="M0 0.5L4 4.5L8 0.5" stroke="#3a3a3a" stroke-width="1.2" fill="none"/></svg>
<div class="combo" style="left:397px;top:171px;width:206px;height:20px;"></div>
<div class="t" style="left:400.5px;top:174.19px;font-size:11px;line-height:14px;height:14px;letter-spacing:-0.330px;">Clock_AXI4Lite</div>
<svg class="abs" style="left:589px;top:180px" width="9" height="6" viewBox="0 0 9 6"><path d="M0 0.5L4 4.5L8 0.5" stroke="#3a3a3a" stroke-width="1.2" fill="none"/></svg>
<div class="combo" style="left:397px;top:195px;width:206px;height:20px;"></div>
<div class="t" style="left:400.5px;top:198.19px;font-size:11px;line-height:14px;height:14px;letter-spacing:-0.188px;">Reset_AXI4Lite</div>
<svg class="abs" style="left:589px;top:204px" width="9" height="6" viewBox="0 0 9 6"><path d="M0 0.5L4 4.5L8 0.5" stroke="#3a3a3a" stroke-width="1.2" fill="none"/></svg>
<div class="btn" style="left:398px;top:220px;width:98px;height:21px;"></div>
<div class="t" style="left:431.7px;top:223.19px;font-size:11px;line-height:14px;height:14px;letter-spacing:0.111px;">Edit...</div>

<!-- block diagram panel -->
<div class="abs" style="left:292px;top:256px;width:184px;height:1px;background:#666;"></div>
<div class="abs" style="left:293px;top:257px;width:182px;height:1px;background:#9a9da4;"></div>
<div class="abs" style="left:292px;top:256px;width:1px;height:408px;background:#707070;"></div>
<div class="abs" style="left:293px;top:257px;width:1px;height:407px;background:#9a9da4;"></div>
<div class="abs" style="left:294px;top:258px;width:180px;height:1px;background:#f8f8f8;"></div>
<div class="abs" style="left:294px;top:258px;width:1px;height:406px;background:#f8f8f8;"></div>
<div class="abs" style="left:474px;top:257px;width:1px;height:407px;background:#8a8f9c;"></div>
<div class="hdr" style="left:299px;top:263px;width:170px;">
  <svg class="abs" style="left:1px;top:4px" width="8" height="5" viewBox="0 0 8 5"><path d="M0 0h8L4 4.5z" fill="#808080"/></svg>
</div>
<div class="abs" style="left:317px;top:291px;width:145px;height:105px;border:1px solid #000;box-sizing:border-box;background:#ebebeb;"></div>
<div class="t" style="left:354.3px;top:299.50px;font-size:13px;line-height:14px;height:14px;letter-spacing:-0.239px;color:#458e8e;">FPGA_INTS</div>
<div class="abs" style="left:333px;top:323px;width:33px;height:57px;border:1px solid #000;box-sizing:border-box;background:#fff;"></div>
<div class="abs" style="left:363px;top:344px;width:3px;height:23px;background:#000;"></div>
<div class="t" style="left:366.8px;top:332.84px;font-size:12px;line-height:14px;height:14px;letter-spacing:-0.354px;">FPGA_INTS</div>
<div class="t" style="left:371.8px;top:349.19px;font-size:11px;line-height:14px;height:14px;letter-spacing:-0.375px;">FPGA_INTS[31..0]</div>
<div class="t" style="left:350.6px;top:355.54px;font-size:10px;line-height:14px;height:14px;letter-spacing:-0.508px;">irq</div>
<div class="t" style="left:443.8px;top:378.54px;font-size:10px;line-height:14px;height:14px;letter-spacing:-0.470px;color:#458e8e;">null</div>
<div class="abs" style="left:366px;top:362px;width:86px;height:2.6px;background:#7f2cf0;"></div>
<svg class="abs" style="left:451px;top:360px" width="10" height="7" viewBox="0 0 10 7"><path d="M0.5 0.5h5.5l3 3l-3 3h-5.5z" fill="#7722ee" stroke="#000" stroke-width="1"/></svg>

<!-- second splitter -->
<div class="abs" style="left:475px;top:257px;width:1px;height:407px;background:#f9f9f9;"></div>
<div class="abs" style="left:476px;top:256px;width:3px;height:408px;background:#f3f3f3;"></div>
<svg class="abs" style="left:476px;top:260px" width="3" height="5" viewBox="0 0 3 5"><path d="M3 0L0 2.5L3 5z" fill="#000"/></svg>
<svg class="abs" style="left:476px;top:272px" width="3" height="5" viewBox="0 0 3 5"><path d="M0 0L3 2.5L0 5z" fill="#000"/></svg>

<!-- parameters panel -->
<div class="abs" style="left:479px;top:256px;width:443px;height:1px;background:#666;"></div>
<div class="abs" style="left:479px;top:256px;width:1px;height:408px;background:#666;"></div>
<div class="abs" style="left:480px;top:257px;width:442px;height:1px;background:#f8f8f8;"></div>
<div class="abs" style="left:480px;top:257px;width:1px;height:407px;background:#f8f8f8;"></div>
<div class="hdr" style="left:485px;top:262px;width:445px;">
  <svg class="abs" style="left:1px;top:4px" width="8" height="5" viewBox="0 0 8 5"><path d="M0 0h8L4 4.5z" fill="#808080"/></svg>
</div>
<div class="t" style="left:314.3px;top:264.19px;font-size:11px;line-height:14px;height:14px;letter-spacing:0.259px;font-weight:bold;">Block Diagram</div>
<div class="t" style="left:500.3px;top:263.19px;font-size:11px;line-height:14px;height:14px;letter-spacing:0.656px;font-weight:bold;">Parameters</div>
<div class="t" style="left:500.1px;top:357.19px;font-size:11px;line-height:14px;height:14px;letter-spacing:0.700px;font-weight:bold;">Waveform</div>
<div class="t" style="left:494.9px;top:280.19px;font-size:11px;line-height:14px;height:14px;letter-spacing:-0.100px;">Associated addressable interface:</div>
<div class="t" style="left:494.9px;top:302.19px;font-size:11px;line-height:14px;height:14px;letter-spacing:0.007px;">Bridged receiver offset:</div>
<div class="t" style="left:494.9px;top:324.19px;font-size:11px;line-height:14px;height:14px;letter-spacing:-0.113px;">Bridges to receiver:</div>
<div class="combo" style="left:662px;top:280px;width:49px;height:20px;"></div>
<div class="t" style="left:665.9px;top:283.19px;font-size:11px;line-height:14px;height:14px;letter-spacing:-0.021px;font-style:italic;">none</div>
<svg class="abs" style="left:697px;top:289px" width="9" height="6" viewBox="0 0 9 6"><path d="M0 0.5L4 4.5L8 0.5" stroke="#3a3a3a" stroke-width="1.2" fill="none"/></svg>
<div class="inp" style="left:662px;top:302px;width:86px;height:20px;"></div>
<div class="t" style="left:665.0px;top:305.19px;font-size:11px;line-height:14px;height:14px;letter-spacing:0.000px;">0</div>
<div class="combo" style="left:662px;top:324px;width:49px;height:20px;"></div>
<div class="t" style="left:665.9px;top:327.19px;font-size:11px;line-height:14px;height:14px;letter-spacing:-0.021px;font-style:italic;">none</div>
<svg class="abs" style="left:697px;top:333px" width="9" height="6" viewBox="0 0 9 6"><path d="M0 0.5L4 4.5L8 0.5" stroke="#3a3a3a" stroke-width="1.2" fill="none"/></svg>
<div class="hdr" style="left:485px;top:356px;width:445px;">
  <svg class="abs" style="left:1px;top:4px" width="8" height="5" viewBox="0 0 8 5"><path d="M0 0h8L4 4.5z" fill="#808080"/></svg>
</div>

<!-- waveform -->
<div class="t" style="left:554.3px;top:393.84px;font-size:12px;line-height:14px;height:14px;letter-spacing:0.109px;">clk</div>
<div class="t" style="left:554.3px;top:434.84px;font-size:12px;line-height:14px;height:14px;letter-spacing:-0.115px;">irq</div>
<svg class="abs" style="left:570px;top:380px" width="340" height="80" viewBox="570 380 340 80">
  <path d="M574 405.5H591.5V389.5H607.5V405.5H622.5V389.5H638.5V405.5H653.5V389.5H669.5V405.5H684.5V389.5H700.5V405.5H715.5V389.5H731.5V405.5H746.5V389.5H762.5V405.5H777.5V389.5H793.5V405.5H808.5V389.5H824.5V405.5H839.5V389.5H855.5V405.5H870.5V389.5H886.5V405.5H900" stroke="#222" stroke-width="1.2" fill="none"/>
  <path d="M574 447.5H622.5L625.5 431.5H870.5L873.5 447.5H900" stroke="#222" stroke-width="1.2" fill="none"/>
</svg>
</body>
</html>
